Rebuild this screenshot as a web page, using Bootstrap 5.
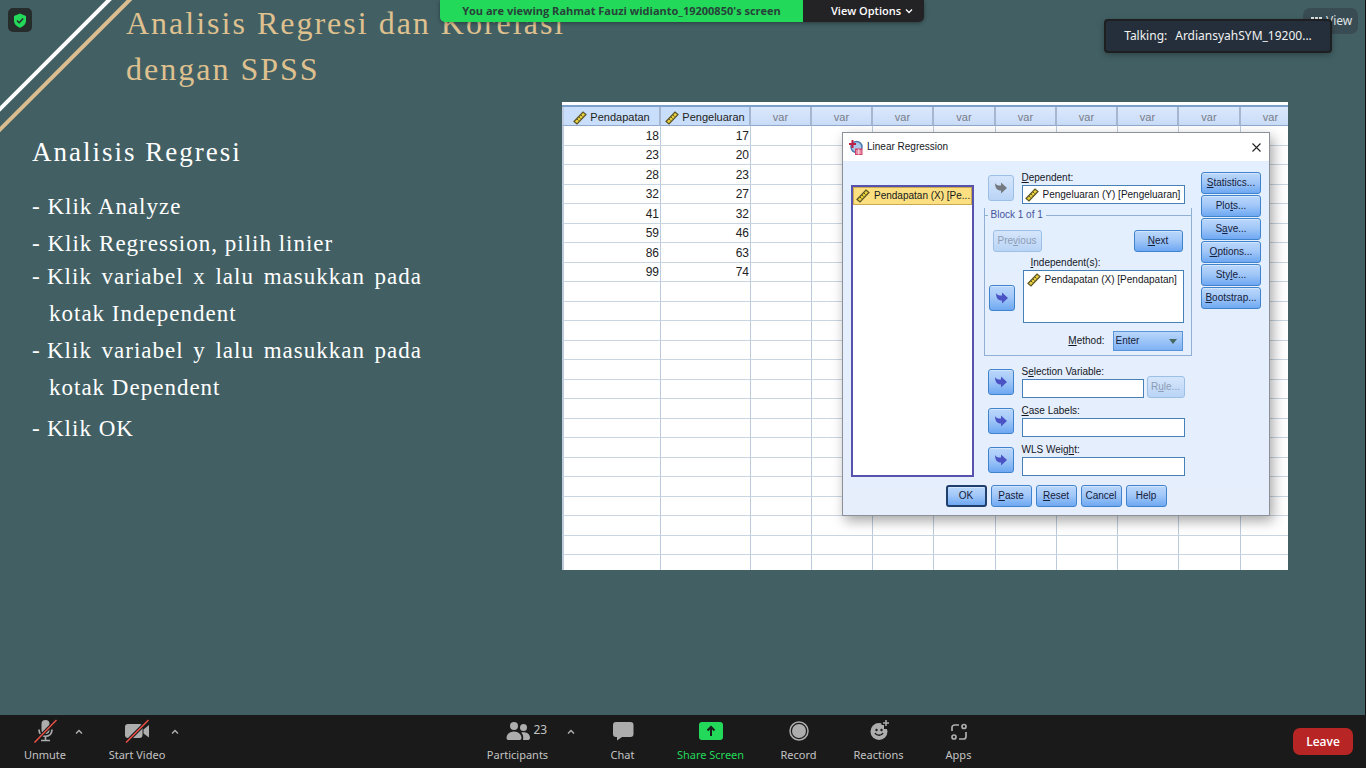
<!DOCTYPE html>
<html lang="id">
<head>
<meta charset="utf-8">
<meta name="viewport" content="width=device-width, initial-scale=1">
<title>Zoom Meeting</title>
<link rel="stylesheet" href="https://cdn.jsdelivr.net/npm/bootstrap@5.3.0/dist/css/bootstrap.min.css">
<style>
body { background: #1a1a1a; font-family: "Noto Sans", "Open Sans", sans-serif; font-size: 12px; line-height: 16px; }
.stage { background: #426064; border-right: 1px solid #111; min-height: 0; }

/* Slide */
.stripes { top: 0; left: 0; }
.slide { font-family: "Liberation Serif", "Times New Roman", serif; color: #fff; }
.slide-title { font-size: 32px; line-height: 46px; letter-spacing: 2px; padding-left: 126px; color: #dfc08f; font-weight: 400; }
.slide-body { margin-top: 10px; padding-left: 32px; padding-right: 77px; }
.slide-text { width: 390px; }
.slide-text h2 { font-size: 27px; line-height: 40px; letter-spacing: 2px; margin: 30px 0 20px; font-weight: 400; }
.slide-text ul { font-size: 23px; letter-spacing: 1px; }
.slide-text li { line-height: 29px; }
.slide-text li.wrapped { line-height: 37px; text-align: justify; padding-left: 17px; text-indent: -17px; }
.dash { display: inline-block; width: 15px; text-indent: 0; }

/* Data sheet */
.sheet { width: 726px; height: 468px; background: #fff; color: #222; border-top: 3px solid #fff; font-family: "Liberation Sans", Arial, sans-serif; }
.grid-data { table-layout: fixed; width: 739px; border-collapse: separate; border-spacing: 0; border-top: 2px solid #7ba1cb; font-size: 12px; line-height: 16px; }
.grid-data th { height: 19px; padding: 2px 0 0; text-align: center; font-size: 11px; font-weight: 400; color: #777c88; background: linear-gradient(#dbe8fc, #c9dcf7); border-right: 2px solid #a5b6d0; border-bottom: 1px solid #8fa8cc; white-space: nowrap; }
.grid-data th.named { color: #222; background: #c9defa; }
.grid-data td { height: 19px; padding: 0 1px 0 0; text-align: right; border-right: 1px solid #bdcbdc; border-bottom: 1px solid #c9d6e2; }
.grid-data tr > :first-child { border-left: 2px solid #bdcbdc; }
.grid-data tr:nth-child(odd) td { height: 20px; }
.c-first { width: 99px; } .c-second { width: 90px; } .c-var { width: 61px; } .c-wide { width: 62px; }

/* Dialog */
.dlg { top: 27px; right: 18px; width: 428px; background: linear-gradient(#e3efff, #e6eefc); border: 1px solid #8b9099; box-shadow: 3px 5px 12px rgba(0,0,0,.35); font-size: 10px; line-height: 14px; color: #14171d; }
.dlg svg { flex-shrink: 0; }
.dlg-bar { height: 28px; background: #fff; padding: 0 8px 0 6px; }
.dlg-main { padding: 10px 8px 0; }
.src { width: 123px; height: 292px; margin-top: 14px; border: 2px solid #5652ae; background: #fff; }
.src .item { height: 18px; background: #fbdf80; border: 1px solid #c9a94f; padding-left: 2px; white-space: nowrap; }
.mid { width: 208px; }
.fld { padding-left: 4px; }
.fld-col { width: 163px; }
.fld-block { width: 161px; }
.box { border: 1px solid #4581b8; background: #fff; border-radius: 0; }
.box, input.box { height: 19px; padding: 0 2px; color: #14171d; font-size: 10px; line-height: 14px; }
.box input { border: 0; outline: 0; padding: 0; background: transparent; color: inherit; min-width: 0; flex: 1; }
.box.tall { height: 53px; padding: 2px 3px; white-space: nowrap; }
.block { border: 1px solid #8fb0d4; border-top: 0; height: 148px; }
.block legend { float: none; width: auto; margin: 0; font-size: 10px; line-height: 14px; color: #46539a; padding: 0 3px; }
.block-top { margin: 0 -1px; }
.rule-l { width: 4px; height: 1px; background: #8fb0d4; }
.rule-r { height: 1px; background: #8fb0d4; }
.b { font-size: 10px; line-height: 14px; padding: 0; height: 22px; border: 1px solid #3f83cd; border-radius: 3px; color: #14203a; background: linear-gradient(#bad7fb, #a3c8f8 45%, #6ea8f2); box-shadow: inset 0 1px 0 #d3e5fd; white-space: nowrap; }
.b:disabled { border-color: #9cbfe6; color: #8d9db5; background: linear-gradient(#d6e6fb, #b9d4f6); opacity: 1; }
.b-arrow { width: 26px; height: 26px; flex: none; display: flex; align-items: center; justify-content: center; color: #4b53c4; }
.b-arrow:disabled { color: #74787f; }
.w-side { width: 60px; row-gap: 1px; padding-top: 1px; }
.w-btn { width: 41px; } .w-block { width: 49px; } .w-rule { width: 38px; }
.sel-row { height: 19px; }
.extras { padding-top: 9px; row-gap: 6px; }
.b-default { border: 2px solid #1f3f6d; }
.method { width: 70px; height: 20px; font-size: 10px; line-height: 14px; padding: 0 2px; border: 1px solid #5a94d6; border-radius: 0; appearance: none; color: #14203a;
  background: url("data:image/svg+xml,%3Csvg xmlns='http://www.w3.org/2000/svg' viewBox='0 0 8 5'%3E%3Cpath d='M0 0h8L4 5z' fill='%23466a62'/%3E%3C/svg%3E") no-repeat right 5px center / 8px 5px, linear-gradient(#bad7fb, #7fb2f4); }

/* Meeting overlays */
.shield { top: 8px; left: 8px; width: 24px; height: 24px; background: #262b2c; border-radius: 5px; color: #23d959; }
.banner { top: 0; left: 440px; height: 22px; font-size: 11px; font-weight: 700; border-radius: 0 0 5px 5px; box-shadow: 0 1px 4px rgba(0,0,0,.4); overflow: hidden; font-family: "Open Sans", sans-serif; }
.banner-who { width: 363px; background: #23d959; color: #27423a; }
.banner-opt { width: 121px; border: 0; background: #232326; color: #fff; font-weight: 600; padding-left: 28px; }
.view { top: 8px; right: 7px; height: 26px; width: 55px; border: 0; border-radius: 7px; background: #3a4c53; color: #dfe4e5; }
.talking { top: 19px; right: 33px; width: 228px; height: 34px; background: #242f3b; border: 2px solid #1e1f21; border-radius: 4px; color: #f2f2f2; box-shadow: 0 2px 6px rgba(0,0,0,.3); }

/* Meeting toolbar */
.bar { height: 53px; background: #1a1a1a; padding-left: 17px; padding-right: 13px; }
.tool { border: 0; background: none; padding: 4px 0 0; color: #adadad; white-space: nowrap; font-size: 11px; line-height: 16px; display: flex; flex-direction: column; align-items: center; }
.tool svg { height: 24px; }
.tool .cap { color: #c3c3c3; margin-top: 4px; }
.tool.go .cap { color: #23d959; }
.caret { border: 0; background: none; padding: 0; width: 12px; height: 32px; color: #adadad; }
.caret-wide { width: 31px; padding-left: 8px; }
.t56 { width: 56px; } .t64 { width: 64px; } .t68 { width: 68px; } .t80 { width: 80px; } .t96 { width: 96px; }
.count { top: 7px; left: 50px; font-size: 12px; color: #c3c3c3; }
.leave { background: #b82525; color: #fff; border: 0; border-radius: 7px; width: 60px; height: 27px; font-weight: 600; font-family: "Open Sans", sans-serif; }
</style>
</head>
<body class="d-flex flex-column vh-100 overflow-hidden">

<svg class="d-none" xmlns="http://www.w3.org/2000/svg">
  <symbol id="ruler" viewBox="0 0 14 14"><path d="M1 10.500 10 1l3 2.500L4 13z" fill="#e8cf3c" stroke="#5b5426" stroke-width="1.200"/><path d="m4 8 1.500 1.500M6 6l1.500 1.500M8 4l1.500 1.500" stroke="#5b5426"/></symbol>
  <symbol id="move" viewBox="0 0 14 14"><path d="M1 2c1 2 2.500 2.500 6 2.500V1.500L13 7l-6 5.500V9.500C3 9.500 1 7 1 2z" fill="currentColor"/></symbol>
  <symbol id="up" viewBox="0 0 8 6"><path d="m1 4.500 3-3 3 3" fill="none" stroke="currentColor" stroke-width="1.500"/></symbol>
</svg>

<main class="stage flex-fill position-relative overflow-hidden">
  <svg class="stripes position-absolute" width="136" height="136" viewBox="0 0 136 136" aria-hidden="true">
    <path d="M-5 114 114-5" stroke="#fff" stroke-width="4"/><path d="M-5 134.500 134.500-5" stroke="#dbbd8f" stroke-width="4"/>
  </svg>

  <article class="slide position-relative">
    <h1 class="slide-title m-0">Analisis Regresi dan Korelasi<br>dengan SPSS</h1>
    <div class="slide-body d-flex justify-content-between">
      <section class="slide-text">
        <h2>Analisis Regresi</h2>
        <ul class="list-unstyled m-0">
          <li>- Klik Analyze</li>
          <li class="mt-2">- Klik Regression, pilih linier</li>
          <li class="wrapped"><span class="dash">-</span>Klik variabel x lalu masukkan pada kotak Independent</li>
          <li class="wrapped"><span class="dash">-</span>Klik variabel y lalu masukkan pada kotak Dependent</li>
          <li class="mt-2"><span class="dash">-</span>Klik OK</li>
        </ul>
      </section>

      <section class="sheet position-relative overflow-hidden flex-shrink-0">
        <table class="grid-data">
          <colgroup><col class="c-first"><col class="c-second"><col class="c-var"><col class="c-var"><col class="c-var"><col class="c-wide"><col class="c-var"><col class="c-var"><col class="c-var"><col class="c-wide"><col class="c-var"></colgroup>
          <thead><tr>
            <th class="named"><svg width="14" height="14"><use href="#ruler"/></svg> Pendapatan</th>
            <th class="named"><svg width="14" height="14"><use href="#ruler"/></svg> Pengeluaran</th>
            <th>var</th><th>var</th><th>var</th><th>var</th><th>var</th><th>var</th><th>var</th><th>var</th><th>var</th>
          </tr></thead>
          <tbody id="rows"></tbody>
        </table>

        <form class="dlg position-absolute" onsubmit="return false">
          <div class="dlg-bar d-flex align-items-center">
            <svg width="14" height="15" viewBox="0 0 14 15" class="me-1"><circle cx="7.500" cy="7" r="5.500" fill="#a9c8e8" stroke="#4b78ad" stroke-width="1.500"/><path d="M3.500 0v8M0 4h7" stroke="#c01f45" stroke-width="2"/><path d="M6 8.500h7.500V15H6z" fill="#d2436a"/><path d="M7 11h5.500M7 13h5.500M9.800 9v5.500" stroke="#fff" stroke-width=".8"/></svg>
            <span>Linear Regression</span>
            <button type="button" class="border-0 bg-transparent p-0 ms-auto" aria-label="Close"><svg class="d-block" width="9" height="9" viewBox="0 0 9 9"><path d="m.5.500 8 8m0-8-8 8" stroke="#222" stroke-width="1.100"/></svg></button>
          </div>
          <div class="dlg-main d-flex justify-content-between">
            <div class="src" role="listbox" aria-label="Variables">
              <div class="item d-flex align-items-center gap-1" role="option"><svg width="14" height="14"><use href="#ruler"/></svg>Pendapatan (X) [Pe...</div>
            </div>

            <div class="mid">
              <div class="fld d-flex align-items-center gap-2">
                <button type="button" class="b b-arrow" disabled aria-label="Move to Dependent"><svg width="14" height="14"><use href="#move"/></svg></button>
                <div class="fld-col"><label class="d-block" for="dep"><u>D</u>ependent:</label>
                  <div class="box d-flex align-items-center gap-1"><svg width="14" height="14"><use href="#ruler"/></svg><input id="dep" value="Pengeluaran (Y) [Pengeluaran]"></div></div>
              </div>

              <fieldset class="block mt-1">
                <div class="block-top d-flex align-items-center"><span class="rule-l"></span><legend>Block 1 of 1</legend><span class="rule-r flex-fill"></span></div>
                <div class="d-flex justify-content-between mt-2 mx-2">
                  <button type="button" class="b w-block" disabled>Pre<u>v</u>ious</button>
                  <button type="button" class="b w-block"><u>N</u>ext</button>
                </div>
                <div class="d-flex gap-2 ps-1 mt-1 align-items-center">
                  <button type="button" class="b b-arrow mt-3" aria-label="Move to Independent"><svg width="14" height="14"><use href="#move"/></svg></button>
                  <div class="fld-block"><span class="d-block ps-2" id="indl"><u>I</u>ndependent(s):</span>
                    <div class="box tall" role="listbox" aria-labelledby="indl"><div class="d-flex align-items-center gap-1" role="option"><svg width="14" height="14"><use href="#ruler"/></svg>Pendapatan (X) [Pendapatan]</div></div></div>
                </div>
                <div class="d-flex justify-content-end align-items-center gap-2 mt-2 me-2">
                  <label for="method"><u>M</u>ethod:</label><select id="method" class="method"><option>Enter</option></select>
                </div>
              </fieldset>

              <div class="extras d-flex flex-column">
                <div class="fld d-flex align-items-center gap-2">
                  <button type="button" class="b b-arrow" aria-label="Move to Selection Variable"><svg width="14" height="14"><use href="#move"/></svg></button>
                  <div class="fld-col"><label class="d-block" for="sel">S<u>e</u>lection Variable:</label>
                    <div class="sel-row d-flex justify-content-between align-items-end"><input class="box w-75" id="sel"><button type="button" class="b w-rule" disabled>R<u>u</u>le...</button></div></div>
                </div>
                <div class="fld d-flex align-items-center gap-2">
                  <button type="button" class="b b-arrow" aria-label="Move to Case Labels"><svg width="14" height="14"><use href="#move"/></svg></button>
                  <div class="fld-col"><label class="d-block" for="lab"><u>C</u>ase Labels:</label><input class="box d-block w-100" id="lab"></div>
                </div>
                <div class="fld d-flex align-items-center gap-2">
                  <button type="button" class="b b-arrow" aria-label="Move to WLS Weight"><svg width="14" height="14"><use href="#move"/></svg></button>
                  <div class="fld-col"><label class="d-block" for="wls">WLS Weig<u>h</u>t:</label><input class="box d-block w-100" id="wls"></div>
                </div>
              </div>
            </div>

            <div class="w-side d-grid align-content-start">
              <button type="button" class="b"><u>S</u>tatistics...</button>
              <button type="button" class="b">Plo<u>t</u>s...</button>
              <button type="button" class="b">S<u>a</u>ve...</button>
              <button type="button" class="b"><u>O</u>ptions...</button>
              <button type="button" class="b">Sty<u>l</u>e...</button>
              <button type="button" class="b"><u>B</u>ootstrap...</button>
            </div>
          </div>
          <div class="d-flex justify-content-center gap-1 py-2">
            <button class="b b-default w-btn">OK</button>
            <button type="button" class="b w-btn"><u>P</u>aste</button>
            <button type="button" class="b w-btn"><u>R</u>eset</button>
            <button type="button" class="b w-btn">Cancel</button>
            <button type="button" class="b w-btn">Help</button>
          </div>
        </form>
      </section>
    </div>
  </article>

  <div class="shield position-absolute d-flex align-items-center justify-content-center">
    <svg width="14" height="15" viewBox="0 0 14 15"><path d="M7 .5 13 3v4.500c0 3.500-2.500 6-6 7.200C3.500 13.500 1 11 1 7.500V3z" fill="currentColor"/><path d="m4 7.500 2.200 2.200L10.200 5.500" fill="none" stroke="#262b2c" stroke-width="1.500"/></svg>
  </div>

  <div class="banner position-absolute d-flex">
    <div class="banner-who d-flex align-items-center justify-content-center">You are viewing Rahmat Fauzi widianto_19200850's screen</div>
    <button class="banner-opt d-flex align-items-center gap-1">View Options <svg width="8" height="6" viewBox="0 0 8 6"><path d="m1 1.500 3 3 3-3" fill="none" stroke="#fff" stroke-width="1.300"/></svg></button>
  </div>

  <button class="view position-absolute d-flex align-items-center gap-1 px-2"><svg class="flex-shrink-0" width="11" height="8" viewBox="0 0 11 8"><path d="M0 1.500h11M0 5.500h11" stroke="currentColor" stroke-width="3" stroke-dasharray="3 1"/></svg>View</button>
  <div class="talking position-absolute d-flex align-items-center justify-content-center gap-2"><span>Talking:</span><span>ArdiansyahSYM_19200...</span></div>
</main>

<footer class="bar d-flex justify-content-between flex-shrink-0">
  <div class="d-flex pe-2">
    <button class="tool t56"><svg width="24" viewBox="0 0 24 24"><rect x="8.500" y="1" width="8" height="14" rx="4" fill="currentColor"/><path d="M6 10.500c0 9 13 9 13 0M12.500 17v4M8 21.500h9" fill="none" stroke="currentColor" stroke-width="1.700"/><path d="M1.500 23.500 23.500 1" stroke="#1a1a1a" stroke-width="3.500"/><path d="M1.500 23.500 23.500 1" stroke="#ea5046" stroke-width="1.500"/></svg><span class="cap">Unmute</span></button>
    <button class="caret me-3" aria-label="Audio options"><svg width="8" height="6"><use href="#up"/></svg></button>
    <button class="tool t64 ms-1"><svg width="26" viewBox="0 0 26 24"><rect x="1" y="5" width="17.500" height="14" rx="3" fill="currentColor"/><path d="M19.500 10.500 25 6v12.500l-5.500-4z" fill="currentColor"/><path d="M2 23.500 24.500 1" stroke="#1a1a1a" stroke-width="3.500"/><path d="M2 23.500 24.500 1" stroke="#ea5046" stroke-width="1.500"/></svg><span class="cap">Start Video</span></button>
    <button class="caret" aria-label="Video options"><svg width="8" height="6"><use href="#up"/></svg></button>
  </div>
  <div class="d-flex">
    <button class="tool t68 position-relative"><svg width="26" viewBox="0 0 26 24"><g fill="currentColor"><circle cx="9" cy="7" r="4"/><circle cx="18.500" cy="8.500" r="3.500"/><path d="M1.500 19c0-3.500 3-6.500 7.500-6.500s7.500 3 7.500 6.500c0 1.500-1 2-2.500 2H4c-1.500 0-2.500-.5-2.500-2zM18 21c.7-3.500-.2-5.500-1.700-7.500 5-1 8.700 1.500 8.700 5 0 2-1 2.500-2.500 2.500z"/></g></svg><span class="count position-absolute">23</span><span class="cap">Participants</span></button>
    <button class="caret caret-wide" aria-label="Participant options"><svg width="8" height="6"><use href="#up"/></svg></button>
    <button class="tool t80"><svg width="24" viewBox="0 0 24 24"><path d="M5 3h14.500a3 3 0 0 1 3 3v9a3 3 0 0 1-3 3H11l-5 3.500V18H5a3 3 0 0 1-3-3V6a3 3 0 0 1 3-3z" fill="currentColor"/></svg><span class="cap">Chat</span></button>
    <button class="tool go t96"><svg width="26" viewBox="0 0 26 24"><rect x="1" y="3" width="24" height="18" rx="3" fill="#23d959"/><path d="M13 17V8.500M9.500 11.500 13 8l3.500 3.500" fill="none" stroke="#1a1a1a" stroke-width="2"/></svg><span class="cap">Share Screen</span></button>
    <button class="tool t80"><svg width="22" viewBox="0 0 22 24"><circle cx="11" cy="12" r="9" fill="none" stroke="currentColor" stroke-width="1.500"/><circle cx="11" cy="12" r="7" fill="currentColor"/></svg><span class="cap">Record</span></button>
    <button class="tool t80"><svg width="24" viewBox="0 0 24 24"><circle cx="12" cy="12.500" r="8.500" fill="currentColor"/><path d="M19 0v10M14.500 4h9" stroke="#1a1a1a" stroke-width="4"/><path d="M19 1v6M16 4h6" stroke="currentColor" stroke-width="1.500"/><circle cx="9.500" cy="11" r="1.200" fill="#1a1a1a"/><circle cx="14.500" cy="11" r="1.200" fill="#1a1a1a"/><path d="M8 14c1.500 3 6.500 3 8 0" fill="none" stroke="#1a1a1a" stroke-width="1.500"/></svg><span class="cap">Reactions</span></button>
    <button class="tool t80"><svg width="20" viewBox="0 0 20 24"><g fill="none" stroke="currentColor" stroke-width="1.700"><path d="M3 12V8.500A2.500 2.500 0 0 1 5.500 6H10M17 13v4.500a2.500 2.500 0 0 1-2.500 2.500H10"/><circle cx="15" cy="7.500" r="2"/><circle cx="5" cy="18" r="2"/></g></svg><span class="cap">Apps</span></button>
  </div>
  <button class="leave align-self-center">Leave</button>
</footer>

<script>
  const data = [[18, 17], [23, 20], [28, 23], [32, 27], [41, 32], [59, 46], [86, 63], [99, 74]];
  const body = document.getElementById("rows");
  for (let r = 0; r < 23; r++) {
    const row = body.insertRow();
    for (let c = 0; c < 11; c++) row.insertCell().textContent = data[r] && c < 2 ? data[r][c] : "";
  }
</script>
<script src="https://cdn.jsdelivr.net/npm/bootstrap@5.3.0/dist/js/bootstrap.bundle.min.js"></script>
</body>
</html>
